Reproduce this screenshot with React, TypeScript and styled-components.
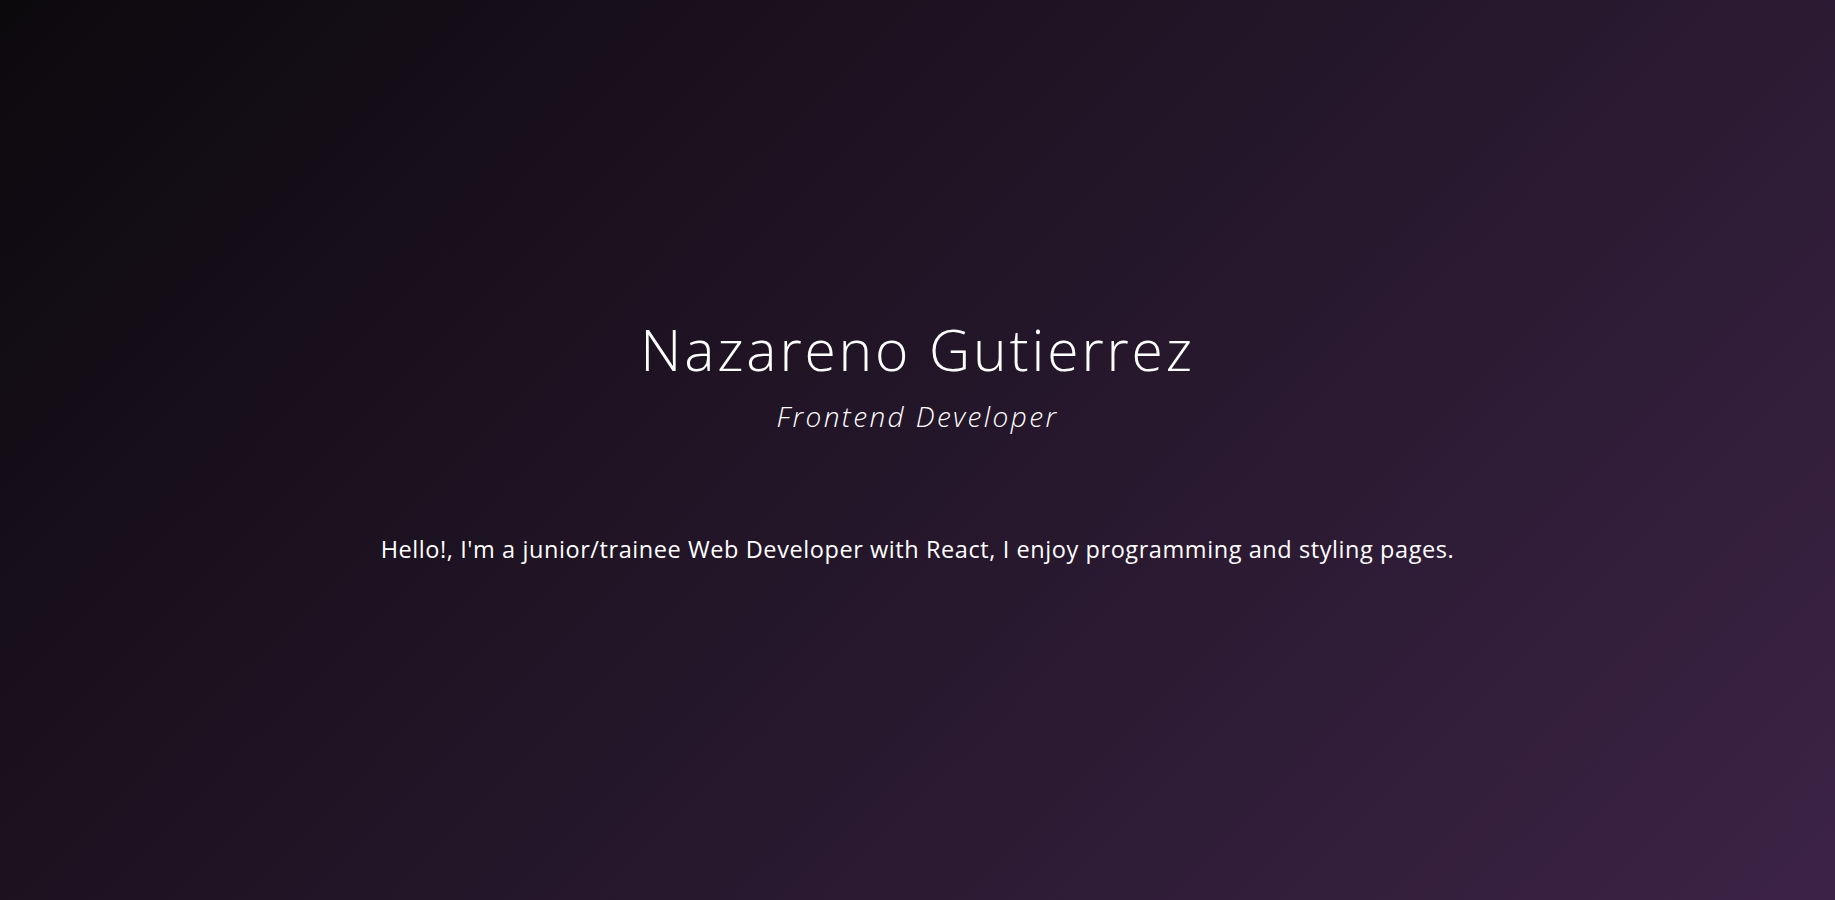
import React from "react";
import styled, { createGlobalStyle } from "styled-components";

const GlobalStyle = createGlobalStyle`
  * { box-sizing: border-box; }
  html, body { margin: 0; padding: 0; }
  body {
    font-family: "Open Sans", "Liberation Sans", sans-serif;
    color: #ffffff;
    background: #0d0a0f;
  }
`;

const Page = styled.main`
  min-height: 100vh;
  display: flex;
  flex-direction: column;
  align-items: center;
  justify-content: center;
  padding-bottom: 22px;
  background: linear-gradient(135deg, #0c090d 0%, #3c2346 100%);
  text-align: center;
`;

const Header = styled.header`
  display: flex;
  flex-direction: column;
  align-items: center;
`;

const Name = styled.h1`
  margin: 0;
  font-family: "Open Sans", sans-serif;
  font-weight: 300;
  font-size: 57px;
  line-height: 1.2;
  letter-spacing: 2.85px;
`;

const Role = styled.h2`
  margin: 17px 0 0;
  font-family: "Open Sans", sans-serif;
  font-weight: 300;
  font-style: italic;
  font-size: 28px;
  line-height: 1.2;
  letter-spacing: 2.4px;
`;

const About = styled.p`
  margin: 101px 0 0;
  font-family: "Open Sans", sans-serif;
  font-weight: 400;
  font-size: 23.5px;
  line-height: 1.2;
  letter-spacing: 0.58px;
`;

export default function App() {
  return (
    <>
      <GlobalStyle />
      <Page>
        <Header>
          <Name>Nazareno Gutierrez</Name>
          <Role>Frontend Developer</Role>
        </Header>
        <About>
          Hello!, I'm a junior/trainee Web Developer with React, I enjoy programming and styling pages.
        </About>
      </Page>
    </>
  );
}
